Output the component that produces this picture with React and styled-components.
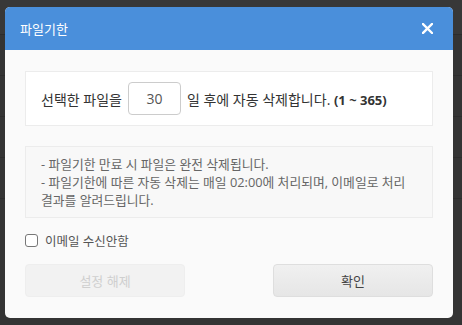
import React, { useState } from "react";
import styled, { createGlobalStyle } from "styled-components";

const GlobalStyle = createGlobalStyle`
  html, body {
    margin: 0;
    padding: 0;
    width: 462px;
    height: 325px;
    overflow: hidden;
    background: #333;
    font-family: "Open Sans", "Noto Sans CJK KR", sans-serif;
  }
`;

const Backdrop = styled.div`
  position: relative;
  width: 462px;
  height: 325px;
  background: #343434;
  overflow: hidden;
`;

const BackToolbar = styled.div`
  height: 34px;
  border-bottom: 1px solid #2c2c2c;
  background: #383838;
`;

const BackRow = styled.div`
  height: 40px;
  border-bottom: 1px solid #2d2d2d;
`;

const Modal = styled.div`
  position: absolute;
  top: 7px;
  left: 5px;
  width: 448px;
  background: #fafafa;
  border-radius: 5px;
  overflow: hidden;
  display: flex;
  flex-direction: column;
`;

const Header = styled.div`
  height: 43px;
  flex-shrink: 0;
  background: #4a8fdb;
  display: flex;
  align-items: center;
  justify-content: space-between;
  padding: 0 19px 0 15px;
  color: #fff;
  font-size: 13px;
`;

const CloseButton = styled.button`
  border: 0;
  background: none;
  padding: 0;
  width: 14px;
  height: 14px;
  display: flex;
  align-items: center;
  justify-content: center;
  cursor: pointer;
`;

const Body = styled.div`
  padding: 21px 20px 21px 20px;
  display: flex;
  flex-direction: column;
`;

const SettingBox = styled.div`
  background: #fff;
  border: 1px solid #ececec;
  padding: 10px 15px;
  display: flex;
  align-items: center;
  gap: 6px;
  font-size: 14px;
  color: #333;
`;

const DaysInput = styled.input`
  width: 53px;
  height: 33px;
  box-sizing: border-box;
  border: 1px solid #ccc;
  border-radius: 4px;
  text-align: center;
  font-family: inherit;
  font-size: 14px;
  color: #555;
  outline: none;
`;

const Range = styled.span`
  font-size: 13px;
  font-weight: 700;
  color: #333;
`;

const NoticeBox = styled.div`
  margin-top: 20px;
  background: #f8f8f8;
  border: 1px solid #ececec;
  padding: 8px 15px;
  font-size: 12.8px;
  line-height: 18px;
  color: #666;
`;

const CheckRow = styled.label`
  margin-top: 13px;
  height: 18px;
  display: flex;
  align-items: center;
  gap: 7px;
  font-size: 12.5px;
  color: #555;
  cursor: pointer;
`;

const CheckBox = styled.span`
  width: 13px;
  height: 13px;
  box-sizing: border-box;
  border: 1px solid #777;
  border-radius: 3px;
  background: #fff;
`;

const Buttons = styled.div`
  margin-top: 15px;
  display: flex;
  justify-content: space-between;
`;

const Button = styled.button`
  width: 160px;
  height: 33px;
  border-radius: 4px;
  font-family: inherit;
  font-size: 13px;
  border: 1px solid ${(p) => (p.disabled ? "#eeeeee" : "#dedede")};
  background: ${(p) =>
    p.disabled ? "#f2f2f2" : "linear-gradient(#f0f0f0, #e6e6e6)"};
  color: ${(p) => (p.disabled ? "#cfcfcf" : "#444")};
  cursor: ${(p) => (p.disabled ? "default" : "pointer")};
`;

const App = () => {
  const [days, setDays] = useState("30");

  return (
    <>
      <GlobalStyle />
      <Backdrop>
        <BackToolbar />
        <BackRow />
        <BackRow />
        <BackRow />
        <BackRow />
        <Modal>
          <Header>
            <span>파일기한</span>
            <CloseButton aria-label="닫기">
              <svg width="11" height="11" viewBox="0 0 11 11">
                <path
                  d="M1 1 L10 10 M10 1 L1 10"
                  stroke="#fff"
                  strokeWidth="2.4"
                  strokeLinecap="square"
                />
              </svg>
            </CloseButton>
          </Header>
          <Body>
            <SettingBox>
              <span>선택한 파일을</span>
              <DaysInput value={days} onChange={(e) => setDays(e.target.value)} />
              <span>
                일 후에 자동 삭제합니다. <Range>(1 ~ 365)</Range>
              </span>
            </SettingBox>
            <NoticeBox>
              - 파일기한 만료 시 파일은 완전 삭제됩니다.
              <br />
              - 파일기한에 따른 자동 삭제는 매일 02:00에 처리되며, 이메일로 처리
              결과를 알려드립니다.
            </NoticeBox>
            <CheckRow>
              <CheckBox />
              이메일 수신안함
            </CheckRow>
            <Buttons>
              <Button disabled>설정 해제</Button>
              <Button>확인</Button>
            </Buttons>
          </Body>
        </Modal>
      </Backdrop>
    </>
  );
};

export default App;
